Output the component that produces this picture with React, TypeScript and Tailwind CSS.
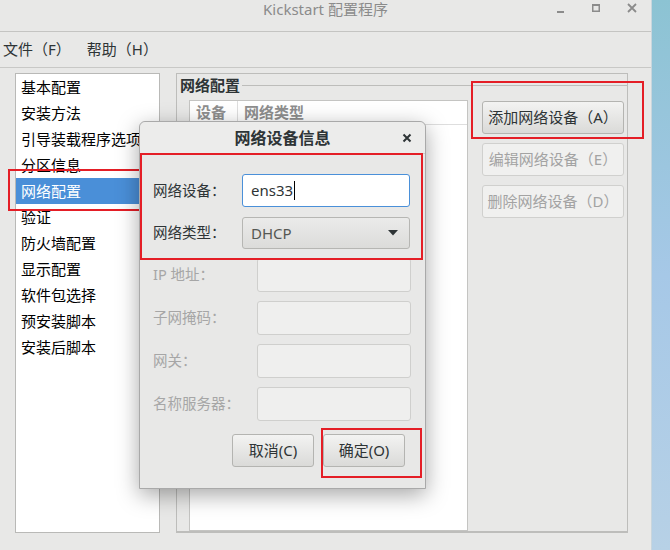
import React from "react";

const FONT = { fontFamily: '"Noto Sans", "Noto Sans CJK SC", sans-serif' };

const sections = [
  "基本配置",
  "安装方法",
  "引导装载程序选项",
  "分区信息",
  "网络配置",
  "验证",
  "防火墙配置",
  "显示配置",
  "软件包选择",
  "预安装脚本",
  "安装后脚本",
];

function TitleBar() {
  return (
    <div className="grid h-[32px] grid-cols-[1fr_auto_1fr] border-b border-[#c4c4c2]">
      <div />
      <div className="pt-px text-[15px] leading-[16px] text-[#8b8b8b]">Kickstart 配置程序</div>
      <div className="flex items-start justify-end gap-[27px] pr-[14px] pt-[3px]">
        <svg width="8" height="10" viewBox="0 0 8 10">
          <rect x="0" y="8" width="7" height="2" fill="#8b8b8b" />
        </svg>
        <svg width="8" height="10" viewBox="0 0 8 10">
          <rect x="0.75" y="1.75" width="6.5" height="6.5" fill="none" stroke="#8b8b8b" strokeWidth="1.5" />
          <rect x="0" y="1" width="8" height="2" fill="#8b8b8b" />
        </svg>
        <svg width="10" height="10" viewBox="0 0 10 10">
          <path d="M1 1 L9 9 M9 1 L1 9" stroke="#8b8b8b" strokeWidth="1.8" />
        </svg>
      </div>
    </div>
  );
}

function MenuBar() {
  return (
    <div className="flex h-[36px] items-center gap-[16px] border-b border-[#c8c8c6] px-[3px] text-[15px] text-[#2e3436]">
      <span>文件（F）</span>
      <span>帮助（H）</span>
    </div>
  );
}

function SectionList() {
  return (
    <div className="h-[460px] w-[145px] border border-[#b9b9b7] bg-white">
      {sections.map((s) => {
        const active = s === "网络配置";
        return (
          <div
            key={s}
            className={`flex h-[26px] items-center whitespace-nowrap pl-[5px] text-[15px] ${
              active ? "bg-[#4a8fd8] text-white" : "text-black"
            }`}
          >
            {s}
          </div>
        );
      })}
    </div>
  );
}

function SideButton({ label, enabled }: { label: string; enabled?: boolean }) {
  return (
    <button
      type="button"
      className={`flex h-[33px] w-[142px] items-center justify-center rounded-[3px] border text-[15px] ${
        enabled
          ? "border-[#b4b4b1] bg-linear-to-b from-[#f3f3f2] to-[#dadad8] text-[#2e3436]"
          : "border-[#d0d0ce] bg-[#f0f0ef] text-[#a3a3a3]"
      }`}
    >
      {label}
    </button>
  );
}

function NetworkFrame() {
  return (
    <div className="flex h-[460px] w-[452px] flex-col border-x border-t border-b-2 border-[#bdbdbb]">
      <div className="flex h-[22px] items-center">
        <span className="pl-[3px] pr-[2px] text-[15px] font-bold leading-[16px] text-[#2e3436]">网络配置</span>
        <div className="h-px flex-1 bg-[#bdbdbb]" />
      </div>
      <div className="mt-[4px] flex flex-1 pl-[12px]">
        <div className="flex w-[279px] flex-col border border-[#c4c4c2] bg-white">
          <div className="flex h-[24px] items-center border-b border-[#dedede] text-[15px] font-bold text-[#8e8e8e]">
            <div className="w-[48px] border-r border-[#dedede] pl-[6px]">设备</div>
            <div className="pl-[6px]">网络类型</div>
          </div>
        </div>
        <div className="ml-[14px] mt-[1px] flex flex-col gap-[9px]">
          <SideButton label="添加网络设备（A）" enabled />
          <SideButton label="编辑网络设备（E）" />
          <SideButton label="删除网络设备（D）" />
        </div>
      </div>
    </div>
  );
}

function DisabledRow({ label }: { label: string }) {
  return (
    <div className="flex h-[34px] items-center">
      <div className="w-[104px] text-[14.5px] text-[#a6a6a6]">{label}</div>
      <div className="h-[34px] w-[154px] rounded-[3px] border border-[#cfcfcd] bg-[#efefee]" />
    </div>
  );
}

function Dialog() {
  return (
    <div className="absolute left-[139px] top-[121px] z-10 flex h-[368px] w-[287px] flex-col rounded-t-[6px] border border-[#a9a9a9] bg-[#e8e8e7] shadow-[0_6px_22px_rgba(0,0,0,0.35)]">
      <div className="grid h-[32px] grid-cols-[1fr_auto_1fr] items-center rounded-t-[6px] border-b border-[#cfcfcd] bg-[#ececeb]">
        <div />
        <div className="text-[16px] font-bold text-[#2e3436]">网络设备信息</div>
        <div className="flex justify-end pr-[13px]">
          <svg width="10" height="10" viewBox="0 0 10 10">
            <path d="M1.5 1.5 L8.5 8.5 M8.5 1.5 L1.5 8.5" stroke="#2e3436" strokeWidth="2" />
          </svg>
        </div>
      </div>

      <div className="flex flex-col pl-[13px] pt-[20px]">
        <div className="flex h-[33px] items-center">
          <div className="w-[89px] text-[14.5px] text-[#2e3436]">网络设备：</div>
          <div className="flex h-[33px] w-[168px] items-center rounded-[3px] border border-[#4a90d9] bg-white pl-[8px] text-[15px] text-[#2e3436]">
            ens33
            <span className="ml-px h-[19px] w-px bg-black" />
          </div>
        </div>
        <div className="mt-[10px] flex h-[32px] items-center">
          <div className="w-[89px] text-[14.5px] text-[#2e3436]">网络类型：</div>
          <div className="flex h-[32px] w-[168px] items-center justify-between rounded-[3px] border border-[#b6b6b3] bg-linear-to-b from-[#ebebea] to-[#dcdcda] pl-[8px] pr-[11px] text-[15px] text-[#555753]">
            DHCP
            <svg width="10" height="6" viewBox="0 0 10 6">
              <path d="M0 0 L10 0 L5 5.5 Z" fill="#2e3436" />
            </svg>
          </div>
        </div>

        <div className="mt-[9px] flex flex-col gap-[9px]">
          <DisabledRow label="IP 地址：" />
          <DisabledRow label="子网掩码：" />
          <DisabledRow label="网关：" />
          <DisabledRow label="名称服务器：" />
        </div>

        <div className="mt-[13px] flex justify-end gap-[9px] pr-[20px]">
          <button
            type="button"
            className="h-[33px] w-[82px] rounded-[3px] border border-[#b4b4b1] bg-linear-to-b from-[#f3f3f2] to-[#dadad8] text-[15px] text-[#2e3436]"
          >
            取消(C)
          </button>
          <button
            type="button"
            className="h-[33px] w-[82px] rounded-[3px] border border-[#b4b4b1] bg-linear-to-b from-[#f3f3f2] to-[#dadad8] text-[15px] text-[#2e3436]"
          >
            确定(O)
          </button>
        </div>
      </div>
    </div>
  );
}

export default function App() {
  return (
    <div className="relative flex h-[550px] w-[670px] overflow-hidden" style={FONT}>
      <div className="flex w-[651px] flex-col bg-[#e8e8e7]">
        <TitleBar />
        <MenuBar />
        <div className="flex gap-[16px] pl-[15px] pt-[5px]">
          <SectionList />
          <NetworkFrame />
        </div>
      </div>
      <div className="flex-1 border-l border-[#c9d6dd] bg-linear-to-b from-[#8cc3d3] via-[#a6c8e7] to-[#b7d1e6]" />

      <Dialog />

      {/* red annotation boxes */}
      <div className="pointer-events-none absolute left-[8px] top-[169px] h-[42px] w-[134px] border-2 border-[#e41e26]" />
      <div className="pointer-events-none absolute left-[140px] top-[153px] z-20 h-[107px] w-[283px] border-2 border-[#e41e26]" />
      <div className="pointer-events-none absolute left-[471px] top-[81px] z-20 h-[58px] w-[173px] border-2 border-[#e41e26]" />
      <div className="pointer-events-none absolute left-[321px] top-[428px] z-20 h-[50px] w-[101px] border-2 border-[#e41e26]" />
    </div>
  );
}
